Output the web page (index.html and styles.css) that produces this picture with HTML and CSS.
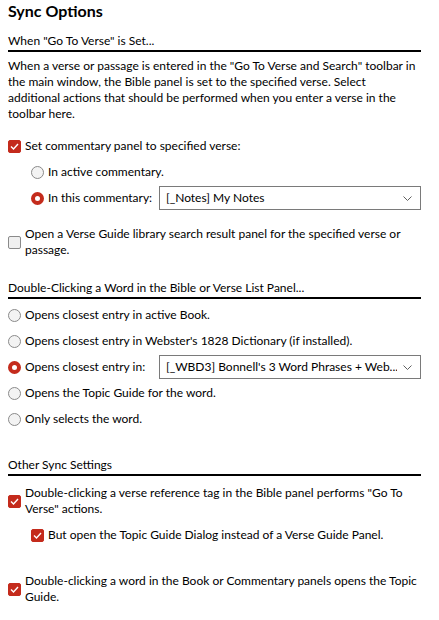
FILE: index.html
```
<!DOCTYPE html>
<html lang="en">
<head>
    <meta charset="UTF-8">
    <title>Sync Options</title>
    <link rel="stylesheet" href="styles.css">
</head>
<body>
    <div class="page">
        <h1>Sync Options</h1>

        <div class="section first">
            <div class="section-title">When "Go To Verse" is Set...</div>
            <p class="desc">When a verse or passage is entered in the "Go To Verse and Search" toolbar in the main window, the Bible panel is set to the specified verse. Select<br>additional actions that should be performed when you enter a verse in the toolbar here.</p>

            <div class="row top-gap">
                <span class="check on"><svg width="9" height="7" viewBox="0 0 9 7"><path d="M1 3.5 L3.5 6 L8 1" fill="none" stroke="#fff" stroke-width="1.4"/></svg></span>
                <span>Set commentary panel to specified verse:</span>
            </div>
            <div class="row indent">
                <span class="radio"></span>
                <span>In active commentary.</span>
            </div>
            <div class="row indent">
                <span class="radio on"></span>
                <span class="label">In this commentary:</span>
                <div class="select">
                    <span class="select-text">[_Notes] My Notes</span>
                    <svg class="chev" width="9" height="5" viewBox="0 0 9 5"><path d="M0.5 0.5 L4.5 4.5 L8.5 0.5" fill="none" stroke="#606060" stroke-width="1"/></svg>
                </div>
            </div>
            <div class="row multi wrap-gap">
                <span class="check"></span>
                <span>Open a Verse Guide library search result panel for the specified verse or passage.</span>
            </div>
        </div>

        <div class="section second">
            <div class="section-title">Double-Clicking a Word in the Bible or Verse List Panel...</div>
            <div class="radios">
                <div class="row">
                    <span class="radio"></span>
                    <span>Opens closest entry in active Book.</span>
                </div>
                <div class="row">
                    <span class="radio"></span>
                    <span>Opens closest entry in Webster's 1828 Dictionary (if installed).</span>
                </div>
                <div class="row">
                    <span class="radio on"></span>
                    <span class="label">Opens closest entry in:</span>
                    <div class="select">
                        <span class="select-text">[_WBD3] Bonnell's 3 Word Phrases + Web...</span>
                        <svg class="chev" width="9" height="5" viewBox="0 0 9 5"><path d="M0.5 0.5 L4.5 4.5 L8.5 0.5" fill="none" stroke="#606060" stroke-width="1"/></svg>
                    </div>
                </div>
                <div class="row">
                    <span class="radio"></span>
                    <span>Opens the Topic Guide for the word.</span>
                </div>
                <div class="row">
                    <span class="radio"></span>
                    <span>Only selects the word.</span>
                </div>
            </div>
        </div>

        <div class="section third">
            <div class="section-title">Other Sync Settings</div>
            <div class="row multi first-item">
                <span class="check on"><svg width="9" height="7" viewBox="0 0 9 7"><path d="M1 3.5 L3.5 6 L8 1" fill="none" stroke="#fff" stroke-width="1.4"/></svg></span>
                <span>Double-clicking a verse reference tag in the Bible panel performs "Go To Verse" actions.</span>
            </div>
            <div class="row indent nested">
                <span class="check on"><svg width="9" height="7" viewBox="0 0 9 7"><path d="M1 3.5 L3.5 6 L8 1" fill="none" stroke="#fff" stroke-width="1.4"/></svg></span>
                <span>But open the Topic Guide Dialog instead of a Verse Guide Panel.</span>
            </div>
            <div class="row multi last-item">
                <span class="check on"><svg width="9" height="7" viewBox="0 0 9 7"><path d="M1 3.5 L3.5 6 L8 1" fill="none" stroke="#fff" stroke-width="1.4"/></svg></span>
                <span>Double-clicking a word in the Book or Commentary panels opens the Topic Guide.</span>
            </div>
        </div>
    </div>
</body>
</html>
```

FILE: styles.css
```
body {
    margin: 0;
    padding: 0;
    background-color: #fff;
    color: #000;
    font-family: 'Lato', 'Noto Sans', sans-serif;
    font-size: 12px;
    line-height: 16px;
}
.page {
    width: 413px;
    padding: 0 18px 0 8px;
}
h1 {
    margin: 0;
    font-size: 16px;
    line-height: 22px;
    font-weight: bold;
}
.section-title {
    border-bottom: 2px solid #000;
    padding-bottom: 1px;
}
.section.first {
    margin-top: 11px;
}
.section.second {
    margin-top: 22px;
}
.section.third {
    margin-top: 25px;
}
.desc {
    margin: 6px 0 0 0;
}
.row {
    display: flex;
    align-items: center;
    gap: 4px;
    min-height: 26px;
}
.row.multi {
    min-height: 0;
}
.row.indent {
    padding-left: 23px;
}
.label {
    white-space: nowrap;
}
.top-gap {
    margin-top: 11px;
}
.wrap-gap {
    margin-top: 15px;
}
.radios {
    margin-top: 3px;
}
.first-item {
    margin-top: 9px;
}
.nested {
    margin-top: 5px;
}
.last-item {
    margin-top: 25px;
}
.check {
    flex: none;
    width: 13px;
    height: 13px;
    box-sizing: border-box;
    border: 1px solid #8a8a8a;
    border-radius: 2px;
    background-color: #f0f0f0;
    display: flex;
    justify-content: center;
    align-items: center;
}
.check.on {
    border-color: #c42b1c;
    background-color: #c42b1c;
}
.radio {
    flex: none;
    width: 13px;
    height: 13px;
    box-sizing: border-box;
    border: 1px solid #8a8a8a;
    border-radius: 50%;
    background-color: #f3f3f3;
}
.radio.on {
    border: 4px solid #c42b1c;
    background-color: #fff;
}
.select {
    margin-left: auto;
    width: 262px;
    height: 24px;
    box-sizing: border-box;
    border: 1px solid #7a7a7a;
    background-color: #fff;
    display: flex;
    align-items: center;
    gap: 6px;
    padding: 0 8px 0 6px;
}
.select-text {
    flex: 1;
    white-space: nowrap;
    overflow: hidden;
}
.chev {
    flex: none;
}
```
